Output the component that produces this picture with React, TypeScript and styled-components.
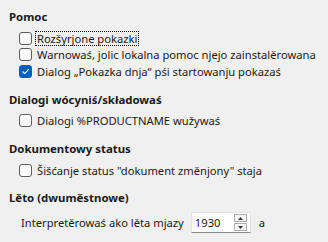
import styled, { createGlobalStyle } from "styled-components";

const GlobalStyle = createGlobalStyle`
  html, body {
    margin: 0;
    padding: 0;
    background: #f0f0f0;
  }
  body {
    font-family: "Noto Sans", "Open Sans", sans-serif;
    font-size: 11.2px;
    color: #1a1a1a;
  }
`;

const Page = styled.div`
  width: 328px;
  height: 242px;
  box-sizing: border-box;
  padding: 9px 0 0 9px;
  display: flex;
  flex-direction: column;
`;

const Section = styled.section<{ $gap?: number }>`
  display: flex;
  flex-direction: column;
  margin-bottom: ${(p) => p.$gap ?? 10}px;
`;

const Heading = styled.div`
  font-weight: 700;
  font-size: 11.4px;
  line-height: 15px;
  margin-bottom: 6px;
`;

const Row = styled.label`
  display: flex;
  align-items: center;
  gap: 4px;
  height: 16.5px;
  padding-left: 10px;
`;

const Box = styled.span<{ $checked?: boolean }>`
  width: 13px;
  height: 13px;
  box-sizing: border-box;
  border-radius: 3px;
  border: 1px solid ${(p) => (p.$checked ? "#005fb8" : "#5d5d5d")};
  background: ${(p) => (p.$checked ? "#005fb8" : "#fbfbfb")};
  display: flex;
  align-items: center;
  justify-content: center;
  flex: none;
`;

const Text = styled.span<{ $focus?: boolean }>`
  line-height: 13px;
  padding: 0 1px;
  outline: ${(p) => (p.$focus ? "1px dotted #000" : "none")};
  white-space: nowrap;
`;

const SpinRow = styled.div`
  display: flex;
  align-items: center;
  padding-left: 12px;
  margin-top: 1px;
  height: 22px;
`;

const SpinField = styled.div`
  width: 60px;
  height: 21px;
  box-sizing: border-box;
  margin-left: 7px;
  background: #fff;
  border: 1px solid #e3e3e3;
  border-bottom-color: #8a8a8a;
  display: flex;
  align-items: center;
  padding-left: 3px;
`;

const SpinValue = styled.span`
  flex: 1;
`;

const SpinButtons = styled.div`
  display: flex;
  flex-direction: column;
  gap: 1px;
  margin-right: 3px;
`;

const SpinButton = styled.div`
  width: 13px;
  height: 8px;
  box-sizing: border-box;
  border: 1px solid #adadad;
  background: #f6f6f6;
  display: flex;
  align-items: center;
  justify-content: center;
`;

const Suffix = styled.span`
  margin-left: 8px;
`;

const Check = () => (
  <svg width="9" height="9" viewBox="0 0 9 9">
    <path d="M1.8 4.8 L3.7 6.6 L7.4 2.6" fill="none" stroke="#fff" strokeWidth="1.2" strokeLinecap="round" strokeLinejoin="round" />
  </svg>
);

const Option = ({ label, checked, focus }: { label: string; checked?: boolean; focus?: boolean }) => (
  <Row>
    <Box $checked={checked}>{checked && <Check />}</Box>
    <Text $focus={focus}>{label}</Text>
  </Row>
);

export default function App() {
  return (
    <>
      <GlobalStyle />
      <Page>
        <Section $gap={12}>
          <Heading>Pomoc</Heading>
          <Option label="Rozšyrjone pokazki" focus />
          <Option label="Warnowaś, jolic lokalna pomoc njejo zainstalěrowana" />
          <Option label="Dialog „Pokazka dnja“ pśi startowanju pokazaś" checked />
        </Section>
        <Section $gap={12}>
          <Heading>Dialogi wócyniś/składowaś</Heading>
          <Option label="Dialogi %PRODUCTNAME wužywaś" />
        </Section>
        <Section $gap={11}>
          <Heading>Dokumentowy status</Heading>
          <Option label={'Šišćanje status "dokument změnjony" staja'} />
        </Section>
        <Section>
          <Heading>Lěto (dwuměstnowe)</Heading>
          <SpinRow>
            <span>Interpretěrowaś ako lěta mjazy</span>
            <SpinField>
              <SpinValue>1930</SpinValue>
              <SpinButtons>
                <SpinButton>
                  <svg width="5" height="3" viewBox="0 0 5 3"><path d="M0 3 L2.5 0 L5 3Z" fill="#333" /></svg>
                </SpinButton>
                <SpinButton>
                  <svg width="5" height="3" viewBox="0 0 5 3"><path d="M0 0 L2.5 3 L5 0Z" fill="#333" /></svg>
                </SpinButton>
              </SpinButtons>
            </SpinField>
            <Suffix>a</Suffix>
          </SpinRow>
        </Section>
      </Page>
    </>
  );
}
